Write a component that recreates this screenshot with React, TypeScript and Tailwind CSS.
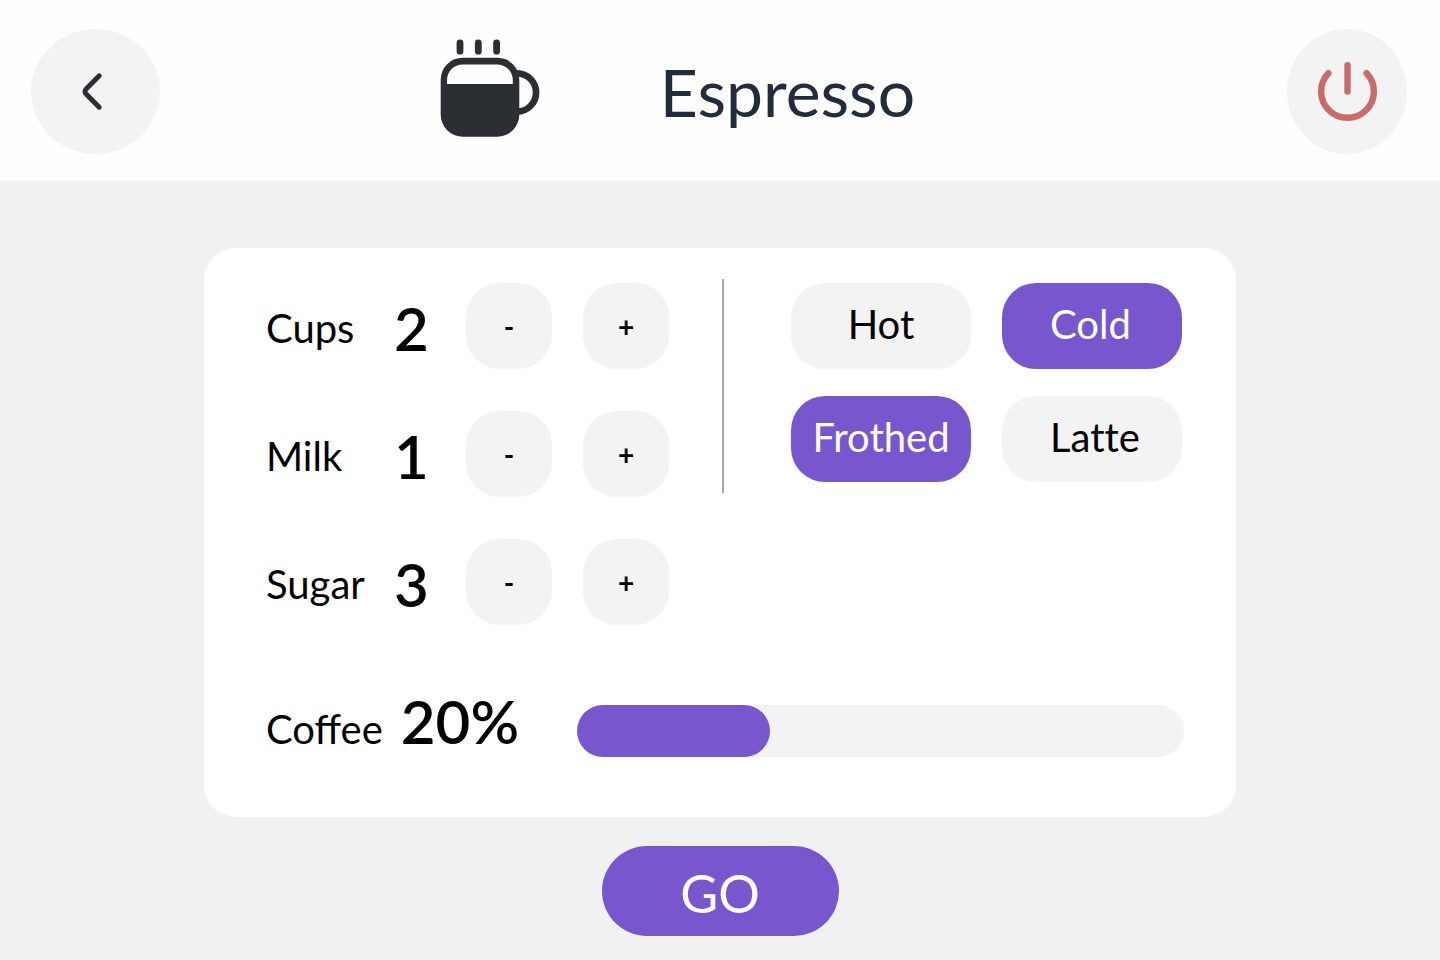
import { useState } from "react";

type Ingredient = { id: string; label: string; amount: number };

const initialIngredients: Ingredient[] = [
  { id: "cups", label: "Cups", amount: 2 },
  { id: "milk", label: "Milk", amount: 1 },
  { id: "sugar", label: "Sugar", amount: 3 },
];

const options = ["Hot", "Cold", "Frothed", "Latte"];

function BackIcon() {
  return (
    <svg viewBox="0 0 129 125" className="size-full" fill="none" stroke="#2b2e33" strokeWidth="5" strokeLinecap="round" strokeLinejoin="round" aria-hidden="true">
      <path d="M68.2 46.8 55.4 59.7Q52.6 62.4 55.4 65.2L68.2 78.2" />
    </svg>
  );
}

function PowerIcon() {
  return (
    <svg viewBox="0 0 120 125" className="size-full" fill="none" stroke="#c96b6b" strokeWidth="6.4" strokeLinecap="round" aria-hidden="true">
      <path d="M41.4 44.2A26.4 26.4 0 1 0 79.6 44.2" />
      <path d="M60.5 36.2V62.6" />
    </svg>
  );
}

function CupIcon() {
  return (
    <svg viewBox="0 0 100 100" className="size-25 shrink-0" fill="none" stroke="#2b2e33" aria-hidden="true">
      <path d="M20 4.8V13.2M38.3 4.8V13.2M56.6 4.8V13.2" strokeWidth="6.8" strokeLinecap="round" />
      <path d="M77 35.4A19.1 19.1 0 0 1 77 73.6" strokeWidth="6.7" />
      <path
        d="M22.7 19.7H57.3A22 22 0 0 1 79.3 41.7V76.7A22 22 0 0 1 57.3 98.7H22.7A22 22 0 0 1 .7 76.7V41.7A22 22 0 0 1 22.7 19.7ZM22.7 26.4A15.7 15.7 0 0 0 7 42.1V46H72.8V42.1A15.7 15.7 0 0 0 57.1 26.4Z"
        fill="#2b2e33"
        fillRule="evenodd"
        stroke="none"
      />
    </svg>
  );
}

function StepButton({ label, symbol, onClick }: { label: string; symbol: string; onClick: () => void }) {
  return (
    <button
      type="button"
      aria-label={label}
      onClick={onClick}
      className="flex size-[86px] items-center justify-center rounded-[34px] bg-[#f3f3f3] text-[28px] leading-none font-bold"
    >
      {symbol}
    </button>
  );
}

export default function App() {
  const [ingredients, setIngredients] = useState(initialIngredients);
  const [selected, setSelected] = useState(["Cold", "Frothed"]);
  const coffee = 20;

  const change = (id: string, step: number) =>
    setIngredients((all) =>
      all.map((item) => (item.id === id ? { ...item, amount: Math.max(0, item.amount + step) } : item)),
    );

  const toggle = (name: string) =>
    setSelected((all) => (all.includes(name) ? all.filter((other) => other !== name) : [...all, name]));

  return (
    <div className="min-h-screen bg-[#f1f1f1] pb-6 font-['Lato','Liberation_Sans',sans-serif] text-black">
      <header className="flex items-start justify-between bg-[#fefefe] pt-[29px] pr-[33px] pb-[27px] pl-[31px]">
        <button type="button" aria-label="Back" className="h-[125px] w-[129px] rounded-[50%] bg-[#f3f3f3]">
          <BackIcon />
        </button>
        <div className="flex flex-1 items-center justify-center gap-[120px] self-center pr-[92px] pb-2">
          <CupIcon />
          <h1 className="pt-2 text-[66px] leading-none text-[#222c3c]">Espresso</h1>
        </div>
        <button type="button" aria-label="Power" className="h-[125px] w-[120px] rounded-[50%] bg-[#f3f3f3]">
          <PowerIcon />
        </button>
      </header>

      <main className="flex flex-col items-center pt-[67px]">
        <section className="w-full max-w-[1032px] rounded-[32px] bg-white pt-[31px] pr-[52px] pb-[60px] pl-[62px]">
          <div className="flex items-start">
            <div className="flex flex-col gap-[42px] pt-1">
              {ingredients.map((item) => (
                <div key={item.id} className="flex items-center">
                  <div className="flex w-[200px] items-center gap-5 pt-1">
                    <span className="min-w-[108px] text-[40px] leading-none">{item.label}</span>
                    <output className="text-[60px] leading-none font-semibold">{item.amount}</output>
                  </div>
                  <div className="flex gap-[31px]">
                    <StepButton label={`Less ${item.label}`} symbol="-" onClick={() => change(item.id, -1)} />
                    <StepButton label={`More ${item.label}`} symbol="+" onClick={() => change(item.id, 1)} />
                  </div>
                </div>
              ))}
            </div>
            <div className="ml-[53px] h-[214px] w-0.5 bg-[#a6a6a6]" />
            <div className="ml-auto grid grid-cols-2 gap-x-[31px] gap-y-[27px] pt-1 pr-0.5">
              {options.map((name) => (
                <button
                  key={name}
                  type="button"
                  aria-pressed={selected.includes(name)}
                  onClick={() => toggle(name)}
                  className={`flex h-[86px] w-[180px] items-center justify-center rounded-[34px] pb-1 text-[40px] leading-none [font-variant-ligatures:none] even:justify-start even:pl-12 ${
                    selected.includes(name) ? "bg-[#7856ce] text-white" : "bg-[#f3f3f3]"
                  }`}
                >
                  {name}
                </button>
              ))}
            </div>
          </div>

          <div className="mt-20 flex h-[52px] items-center">
            <div className="flex w-[311px] items-baseline gap-[18px] pb-5">
              <span id="coffee-label" className="text-[40px] leading-none">
                Coffee
              </span>
              <span className="text-[60px] leading-none font-semibold">{coffee}%</span>
            </div>
            <div
              role="progressbar"
              aria-labelledby="coffee-label"
              aria-valuenow={coffee}
              aria-valuemin={0}
              aria-valuemax={100}
              className="h-[52px] flex-1 rounded-[26px] bg-[#f3f3f3]"
            >
              <div className="h-full w-[193px] rounded-[26px] bg-[#7856ce]" />
            </div>
          </div>
        </section>

        <button
          type="button"
          className="mt-[29px] flex h-[90px] w-[237px] items-center justify-center rounded-[45px] bg-[#7856ce] pt-1 text-[52px] leading-none text-white"
        >
          GO
        </button>
      </main>
    </div>
  );
}
